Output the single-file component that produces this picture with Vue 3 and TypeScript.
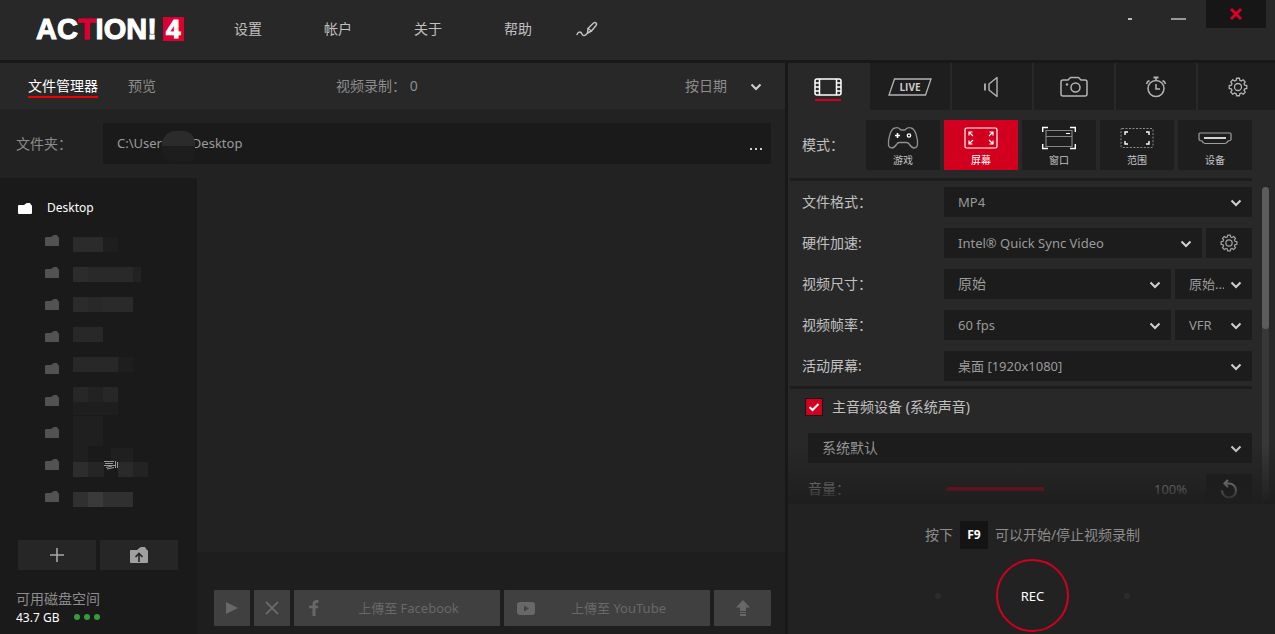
<script setup lang="ts">
import { ref } from 'vue'

interface Block { x: number; y: number; w: number; h: number; c: string }
interface Mode { id: string; label: string }

const menu: string[] = ['设置', '帐户', '关于', '帮助']
const tabs: string[] = ['film', 'live', 'audio', 'camera', 'timer', 'gear']
const tabNames: string[] = ['视频录制', '直播', '音频', '截图', '计时', '设置']
const modes: Mode[] = [
  { id: 'game', label: '游戏' },
  { id: 'screen', label: '屏幕' },
  { id: 'window', label: '窗口' },
  { id: 'area', label: '范围' },
  { id: 'device', label: '设备' },
]
const activeTab = ref('film')
const activeMode = ref('screen')
const path = ref('C:\\Users       Desktop')
const audioOn = ref(true)
const folders = 9

const hidden: Block[] = [
  { x: 0, y: 7, w: 30, h: 15, c: '#2b2b2b' },
  { x: 30, y: 7, w: 15, h: 15, c: '#1e1e1e' },
  { x: 0, y: 37, w: 15, h: 15, c: '#2c2c2c' },
  { x: 15, y: 37, w: 45, h: 15, c: '#292929' },
  { x: 60, y: 37, w: 8, h: 15, c: '#222222' },
  { x: 0, y: 67, w: 15, h: 15, c: '#2b2b2b' },
  { x: 15, y: 67, w: 15, h: 15, c: '#282828' },
  { x: 30, y: 67, w: 30, h: 15, c: '#2a2a2a' },
  { x: 0, y: 97, w: 30, h: 15, c: '#282828' },
  { x: 0, y: 127, w: 45, h: 15, c: '#282828' },
  { x: 45, y: 127, w: 15, h: 15, c: '#1e1e1e' },
  { x: 0, y: 157, w: 45, h: 15, c: '#272727' },
  { x: 15, y: 157, w: 15, h: 15, c: '#222222' },
  { x: 0, y: 172, w: 45, h: 13, c: '#1e1e1e' },
  { x: 0, y: 186, w: 30, h: 30, c: '#1f1f1f' },
  { x: 0, y: 216, w: 15, h: 16, c: '#1f1f1f' },
  { x: 38, y: 218, w: 22, h: 14, c: '#1f1f1f' },
  { x: 0, y: 232, w: 15, h: 15, c: '#2d2d2d' },
  { x: 15, y: 232, w: 16, h: 15, c: '#252525' },
  { x: 45, y: 232, w: 15, h: 15, c: '#2a2a2a' },
  { x: 60, y: 232, w: 15, h: 15, c: '#232323' },
  { x: 0, y: 262, w: 15, h: 15, c: '#303030' },
  { x: 15, y: 262, w: 15, h: 15, c: '#3a3a3a' },
  { x: 30, y: 262, w: 30, h: 15, c: '#303030' },
]

const gearPath = (() => {
  const pts: string[] = []
  const teeth = 8
  for (let i = 0; i < teeth; i++) {
    const a = (i / teeth) * Math.PI * 2 - Math.PI / 2
    const steps: [number, number][] = [[-0.27, 6.9], [-0.17, 8.9], [0.17, 8.9], [0.27, 6.9]]
    for (const [d, r] of steps) {
      pts.push(`${(10 + Math.cos(a + d) * r).toFixed(2)} ${(10 + Math.sin(a + d) * r).toFixed(2)}`)
    }
  }
  return `M${pts.join('L')}Z`
})()
</script>

<template>
  <div class="app">
    <header class="top">
      <div class="logo"><span class="word">AC<em>T</em>ION!</span><span class="four">4</span></div>
      <nav class="menu">
        <a v-for="m in menu" :key="m" href="#">{{ m }}</a>
        <button class="pen" aria-label="绘图">
          <svg width="22" height="16" viewBox="0 0 22 16" fill="none" stroke="#c4c4c4" stroke-width="1.4" stroke-linecap="round" stroke-linejoin="round">
            <path d="M1 13.500C2.500 10 5 10.500 6 13S9 15 11.500 12" />
            <path d="M11.500 12L12 7.500L17.500 2C19.500.500 21.500 2.500 20 4.500L15.500 10Z" />
            <path d="M12 7.500L15.500 10" />
          </svg>
        </button>
      </nav>
      <div class="win">
        <button class="tiny" aria-label="迷你模式"><i></i></button>
        <button class="mini" aria-label="最小化"><i></i></button>
        <button class="close" aria-label="关闭">
          <svg width="12" height="12" viewBox="0 0 12 12" stroke="#e00025" stroke-width="2.800"><path d="M1 1L11 11M11 1L1 11" /></svg>
        </button>
      </div>
    </header>

    <main class="body">
      <section class="left">
        <div class="bar">
          <button class="view on">文件管理器</button>
          <button class="view">预览</button>
          <span class="count">视频录制： 0</span>
          <span class="pick sort">
            <select aria-label="排序"><option>按日期</option></select>
            <svg class="chev" width="12" height="8" viewBox="0 0 12 8"><path d="M1.500 1.500L6 6L10.500 1.500" /></svg>
          </span>
        </div>
        <div class="pathrow">
          <label for="path">文件夹：</label>
          <div class="field">
            <input id="path" v-model="path" type="text" spellcheck="false" />
            <span class="smudge"></span>
            <button aria-label="浏览"><i></i><i></i><i></i></button>
          </div>
        </div>
        <div class="files">
          <aside class="side">
            <button class="root">
              <svg width="14" height="11" viewBox="0 0 14 11" fill="#fff"><path d="M0 3Q0 2 1 2H6L8 .5Q8.500 0 9 0H12L12.800 1.500Q14 2 14 3V10Q14 11 13 11H1Q0 11 0 10Z" /></svg>
              Desktop
            </button>
            <div class="tree">
              <ul>
                <li v-for="n in folders" :key="n">
                  <svg width="14" height="11" viewBox="0 0 14 11" fill="#525252"><path d="M0 3Q0 2 1 2H6L8 .5Q8.500 0 9 0H12L12.800 1.500Q14 2 14 3V10Q14 11 13 11H1Q0 11 0 10Z" /></svg>
                </li>
              </ul>
              <svg class="hidden" width="76" height="288" viewBox="0 0 76 288">
                <rect v-for="(b, i) in hidden" :key="i" :x="b.x" :y="b.y" :width="b.w" :height="b.h" :fill="b.c" />
                <path d="M31 231.500H41M32 233.500H40M31 235.500H42M33 237.500L39 236M34 239L41 237.500M42.500 231V238M44.500 232V238" stroke="#999" stroke-width="1" fill="none" />
              </svg>
            </div>
            <div class="sidebtns">
              <button aria-label="添加"><svg width="14" height="14" viewBox="0 0 14 14" stroke="#a8a8a8" stroke-width="1.600"><path d="M7 0V14M0 7H14" /></svg></button>
              <button aria-label="上级文件夹">
                <svg width="18" height="16" viewBox="0 0 18 16"><path d="M0 4Q0 3 1 3H7L10 .5Q10.500 0 11 0H15L16.500 2.500Q18 3 18 4V15Q18 16 17 16H1Q0 16 0 15Z" fill="#a0a0a0" /><path d="M9 15V6.500M5.500 10L9 6.500L12.500 10" fill="none" stroke="#242424" stroke-width="1.600" /></svg>
              </button>
            </div>
            <p class="disk">可用磁盘空间</p>
            <p class="free">43.7 GB <span><i></i><i></i><i></i></span></p>
          </aside>
          <div class="content">
            <div class="list"></div>
            <div class="actions">
              <button class="sq" disabled aria-label="播放"><svg width="14" height="14" viewBox="0 0 14 14" fill="#686868"><path d="M1 1L13 7L1 13Z" /></svg></button>
              <button class="sq" disabled aria-label="删除"><svg width="14" height="14" viewBox="0 0 14 14" stroke="#686868" stroke-width="1.800"><path d="M1 1L13 13M13 1L1 13" /></svg></button>
              <button class="up" disabled>
                <svg width="18" height="16" viewBox="0 0 18 16" fill="none" stroke="#686868" stroke-width="3"><path d="M11.500 1.500H9.500Q7 1.500 7 4.500V16" /><path d="M2 7H11" stroke-width="2.600" /></svg>
                <span>上傳至 Facebook</span>
              </button>
              <button class="up" disabled>
                <svg width="18" height="13" viewBox="0 0 18 13"><rect width="18" height="13" rx="3" fill="#686868" /><path d="M7 3.500V9.500L12 6.500Z" fill="#444" /></svg>
                <span>上傳至 YouTube</span>
              </button>
              <button class="wide" disabled aria-label="上传"><svg width="14" height="16" viewBox="0 0 14 16" fill="#686868"><path d="M7 0L14 7.500H10V11H4V7.500H0ZM4 12H10V13H4ZM4 14H10V16H4Z" /></svg></button>
            </div>
          </div>
        </div>
      </section>

      <section class="right">
        <div class="tabs">
          <button v-for="(t, i) in tabs" :key="t" :class="{ on: activeTab === t }" :aria-label="tabNames[i]" @click="activeTab = t">
            <svg v-if="t === 'film'" width="28" height="18" viewBox="0 0 28 18" fill="none" stroke="#fff" stroke-width="1.500">
              <rect x="1" y="1" width="26" height="16" rx="2" /><path d="M5.500 1V17M22.500 1V17M1 5H5.500M1 9H5.500M1 13H5.500M22.500 5H27M22.500 9H27M22.500 13H27" />
            </svg>
            <svg v-else-if="t === 'live'" width="44" height="18" viewBox="0 0 44 18" fill="none" stroke="#b4b4b4" stroke-width="1.300">
              <path d="M6.500 1H43L37.500 17H1Z" /><text x="22" y="13" text-anchor="middle" fill="#ccc" stroke="none" class="live">LIVE</text>
            </svg>
            <svg v-else-if="t === 'audio'" width="18" height="22" viewBox="0 0 18 22" fill="none" stroke="#b4b4b4" stroke-width="1.400">
              <path d="M6 8L14 1.500V20.500L6 14Z" stroke-linejoin="round" /><path d="M2 7.500V14.500" stroke-width="1.800" />
            </svg>
            <svg v-else-if="t === 'camera'" width="28" height="22" viewBox="0 0 28 22" fill="none" stroke="#b4b4b4" stroke-width="1.500">
              <path d="M3 4H8L10.500 1.500H18.500L21 4H25Q27 4 27 6V18Q27 20 25 20H3Q1 20 1 18V6Q1 4 3 4Z" stroke-linejoin="round" /><circle cx="15.500" cy="11.500" r="4.500" /><circle cx="7" cy="8.500" r="1.200" fill="#b4b4b4" stroke="none" />
            </svg>
            <svg v-else-if="t === 'timer'" width="22" height="22" viewBox="0 0 22 22" fill="none" stroke="#b4b4b4" stroke-width="1.500">
              <circle cx="11" cy="12.500" r="8" /><path d="M11 8V13H15M11 2V4.500M1.500 8Q2 5.500 4.500 4.500M20.500 8Q20 5.500 17.500 4.500" /><path d="M8.500 1.500H13.500" stroke-width="2" />
            </svg>
            <svg v-else width="20" height="20" viewBox="0 0 20 20" fill="none" stroke="#b4b4b4" stroke-width="1.300" stroke-linejoin="round">
              <path :d="gearPath" /><circle cx="10" cy="10" r="3.500" />
            </svg>
          </button>
        </div>

        <div class="modes">
          <span class="lab">模式：</span>
          <div class="modegrid">
            <button v-for="m in modes" :key="m.id" :class="{ on: activeMode === m.id }" @click="activeMode = m.id">
              <svg v-if="m.id === 'game'" width="34" height="24" viewBox="0 0 34 24" fill="none" stroke="#909090" stroke-width="1.300">
                <path d="M9 2Q12 1 14 3L15 4H19L20 3Q22 1 25 2Q28 2.500 30 8Q32 14 31.500 19Q31 22 28 22Q26 22 23.500 18.500Q22.500 16.500 20.500 16.500H13.500Q11.500 16.500 10.500 18.500Q8 22 6 22Q3 22 2.500 19Q2 14 4 8Q6 2.500 9 2Z" />
                <path d="M11.500 7V12M9 9.500H14" stroke="#fff" stroke-width="1.600" /><circle cx="23" cy="9.500" r="1.700" stroke="#fff" />
              </svg>
              <svg v-else-if="m.id === 'screen'" width="34" height="24" viewBox="0 0 34 24" fill="none" stroke="#fff" stroke-width="1.200">
                <rect x="1" y="2" width="32" height="20" rx="1.500" />
                <path d="M5 9.500V6H8.500M5 6L9 10M29 9.500V6H25.500M29 6L25 10M5 14.500V18H8.500M5 18L9 14M29 14.500V18H25.500M29 18L25 14" />
              </svg>
              <svg v-else-if="m.id === 'window'" width="34" height="24" viewBox="0 0 34 24" fill="none">
                <g stroke="#848484" stroke-width="1.200"><path d="M4 4.500H30V20.500H4ZM4 10.500H30" /></g>
                <path d="M.700 6V1.500H6M28 1.500H33.300V6M.700 18V22.500H6M28 22.500H33.300V18" stroke="#fff" stroke-width="1.400" /><path d="M24 7.500H28" stroke="#fff" />
              </svg>
              <svg v-else-if="m.id === 'area'" width="34" height="24" viewBox="0 0 34 24" fill="none">
                <rect x="1" y="2.500" width="32" height="19" rx="1" stroke="#8a8a8a" stroke-dasharray="2 1.500" />
                <path d="M5 9V6H8M26 6H29V9M5 15V18H8M26 18H29V15" stroke="#fff" stroke-width="1.400" />
              </svg>
              <svg v-else width="34" height="24" viewBox="0 0 34 24" fill="none">
                <path d="M2 7H32Q33 7 33 8V13Q33 14 32 14.500L30 15Q29 17.500 27 17.500H7Q5 17.500 4 15L2 14.500Q1 14 1 13V8Q1 7 2 7Z" stroke="#a0a0a0" stroke-width="1.200" />
                <path d="M6 12H28" stroke="#fff" stroke-width="1.600" />
              </svg>
              <span>{{ m.label }}</span>
            </button>
          </div>
        </div>

        <div class="settings">
          <div class="rows">
            <div class="row first">
              <label for="fmt">文件格式：</label>
              <span class="pick"><select id="fmt"><option>MP4</option></select><svg class="chev" width="12" height="8" viewBox="0 0 12 8"><path d="M1.500 1.500L6 6L10.500 1.500" /></svg></span>
            </div>
            <div class="row">
              <label for="hw">硬件加速:</label>
              <span class="pick"><select id="hw"><option>Intel® Quick Sync Video</option></select><svg class="chev" width="12" height="8" viewBox="0 0 12 8"><path d="M1.500 1.500L6 6L10.500 1.500" /></svg></span>
              <button class="icon" aria-label="加速设置"><svg width="18" height="18" viewBox="0 0 20 20" fill="none" stroke="#a0a0a0" stroke-width="1.400" stroke-linejoin="round"><path :d="gearPath" /><circle cx="10" cy="10" r="3.500" /></svg></button>
            </div>
            <div class="row">
              <label for="size">视频尺寸：</label>
              <span class="pick han"><select id="size"><option>原始</option></select><svg class="chev" width="12" height="8" viewBox="0 0 12 8"><path d="M1.500 1.500L6 6L10.500 1.500" /></svg></span>
              <span class="pick small"><select aria-label="宽高比"><option>原始...</option></select><svg class="chev" width="12" height="8" viewBox="0 0 12 8"><path d="M1.500 1.500L6 6L10.500 1.500" /></svg></span>
            </div>
            <div class="row">
              <label for="fps">视频帧率：</label>
              <span class="pick"><select id="fps"><option>60 fps</option></select><svg class="chev" width="12" height="8" viewBox="0 0 12 8"><path d="M1.500 1.500L6 6L10.500 1.500" /></svg></span>
              <span class="pick small"><select aria-label="帧率模式"><option>VFR</option></select><svg class="chev" width="12" height="8" viewBox="0 0 12 8"><path d="M1.500 1.500L6 6L10.500 1.500" /></svg></span>
            </div>
            <div class="row">
              <label for="scr">活动屏幕:</label>
              <span class="pick"><select id="scr"><option>桌面 [1920x1080]</option></select><svg class="chev" width="12" height="8" viewBox="0 0 12 8"><path d="M1.500 1.500L6 6L10.500 1.500" /></svg></span>
            </div>
            <div class="audio">
              <label class="check">
                <input v-model="audioOn" type="checkbox" />
                <svg v-if="audioOn" class="tick" width="16" height="16" viewBox="0 0 16 16" fill="none" stroke="#fff" stroke-width="2"><path d="M3.500 8L6.500 11L12.500 5" /></svg>
                主音频设备 (系统声音)
              </label>
              <span class="pick han"><select aria-label="主音频设备"><option>系统默认</option></select><svg class="chev" width="12" height="8" viewBox="0 0 12 8"><path d="M1.500 1.500L6 6L10.500 1.500" /></svg></span>
              <div class="volume">
                <label for="vol">音量：</label>
                <input id="vol" type="range" min="0" max="200" value="100" />
                <output for="vol">100%</output>
                <button class="icon" aria-label="重置"><svg width="18" height="20" viewBox="0 0 18 20" fill="none" stroke="#ccc" stroke-width="2.200"><path d="M8 1L4.500 4.500L8 8M4.500 4.500H9A7 7 0 1 1 2 11.500" /></svg></button>
              </div>
            </div>
          </div>
          <div class="scroll"><i></i></div>
          <div class="fade"></div>
        </div>

        <footer class="foot">
          <p>按下 <kbd>F9</kbd> 可以开始/停止视频录制</p>
          <div class="recrow"><i></i><button class="rec">REC</button><i></i></div>
        </footer>
      </section>
    </main>
  </div>
</template>

<style>
body { background: #222; }
</style>

<style scoped>
* { box-sizing: border-box; }
.app { display: flex; flex-direction: column; min-height: 100vh; background: #282828; color: #bcbcbc; font-family: "Noto Sans", "Noto Sans CJK SC", sans-serif; font-size: 13px; line-height: 20px; overflow: hidden; }
button, select, input { font: inherit; color: inherit; background: none; border: 0; margin: 0; padding: 0; border-radius: 0; outline: none; }
button { display: flex; align-items: center; justify-content: center; cursor: pointer; }
svg { display: block; flex: none; }
p, ul { margin: 0; padding: 0; list-style: none; }

.top { display: flex; height: 63px; border-bottom: 3px solid #181818; padding-left: 36px; }
.logo { display: flex; align-items: center; gap: 6px; width: 198px; height: 58px; color: #fff; font-family: "Liberation Sans", sans-serif; font-weight: 700; }
.word { font-size: 29px; line-height: 24px; -webkit-text-stroke: 1px currentColor; }
.word em { font-style: normal; color: #dc0032; }
.four { width: 21px; background: #dc0032; font-size: 26px; line-height: 24px; text-align: center; -webkit-text-stroke: 1px currentColor; }
.menu { display: flex; align-items: center; gap: 62px; height: 58px; font-size: 14px; }
.menu a { color: #c0c0c0; text-decoration: none; }
.pen { margin-left: -18px; }
.win { display: flex; align-items: flex-start; margin-left: auto; padding-right: 9px; }
.tiny, .mini { height: 38px; }
.tiny { width: 24px; margin-right: 12px; }
.mini { width: 48px; margin-right: 4px; }
.tiny i { width: 4px; height: 2px; background: #bbb; }
.mini i { width: 15px; height: 2px; background: #999; }
.close { width: 60px; height: 28px; background: #161616; }

.body { flex: 1; display: flex; }
.left { flex: 1; display: flex; flex-direction: column; min-width: 0; border-right: 3px solid #181818; background: #222; }
.bar { display: flex; align-items: center; height: 46px; padding: 0 20px 0 28px; background: #282828; color: #8c8c8c; font-size: 14px; }
.view { margin-right: 30px; height: 24px; padding-top: 2px; border-bottom: 2px solid transparent; }
.view.on { color: #fff; border-color: #f00000; }
.count { margin-left: 150px; }
.sort { margin-left: auto; width: 80px; }
.pathrow { display: flex; align-items: center; height: 69px; padding: 0 14px 0 16px; color: #8c8c8c; font-size: 14px; }
.pathrow label { width: 87px; }
.field { position: relative; flex: 1; display: flex; height: 41px; background: #1a1a1a; font-size: 13px; color: #9a9a9a; }
.field input { flex: 1; padding-left: 14px; padding-bottom: 2px; }
.smudge { position: absolute; left: 59px; top: 8px; width: 33px; height: 30px; border-radius: 14px 12px 4px 12px; background: linear-gradient(#2b2b2b 50%, #1d1d1d 50%); }
.field button { width: 30px; gap: 3px; padding-top: 10px; }
.field button i { width: 2px; height: 2px; background: #ccc; }

.files { flex: 1; display: flex; }
.side { width: 197px; padding-top: 18px; background: #1a1a1a; }
.root { height: 24px; margin-left: 18px; gap: 15px; color: #fff; font-size: 12px; }
.tree { display: flex; gap: 14px; height: 320px; padding: 10px 0 0 45px; }
.tree li { display: flex; height: 32px; padding-top: 5px; }
.sidebtns { display: flex; gap: 4px; padding: 0 19px 0 18px; }
.sidebtns button { flex: 1; height: 30px; background: #262626; }
.disk { margin: 19px 0 0 16px; color: #8c8c8c; font-size: 14px; }
.free { display: flex; align-items: center; gap: 15px; height: 18px; margin-left: 16px; color: #fff; font-size: 12px; }
.free span { display: flex; gap: 4px; margin-top: -3px; }
.free i { width: 6px; height: 6px; border-radius: 3px; background: #349c3a; }

.content { flex: 1; display: flex; flex-direction: column; }
.list { flex: 1; }
.actions { display: flex; gap: 4px; padding: 38px 14px 8px 17px; background: #1e1e1e; }
.actions button { height: 36px; background: #404040; border-radius: 1px; color: #686868; font-size: 13px; cursor: default; }
.sq { width: 36px; }
.actions .up { flex: 1; padding: 0 8px 0 13px; }
.actions .up span { flex: 1; text-align: center; }
.wide { width: 57px; }

.right { width: 487px; display: flex; flex-direction: column; background: #282828; }
.tabs { display: grid; grid-template-columns: repeat(6, 80px); gap: 2px; height: 47px; overflow: hidden; }
.tabs button { background: #1e1e1e; }
.tabs button.on { background: none; flex-direction: column; gap: 3px; padding-top: 6px; }
.tabs button.on::after { content: ""; width: 26px; height: 2px; background: #d2001e; }
.live { font: 700 10px "Open Sans", sans-serif; }
.modes { display: flex; align-items: center; padding: 10px 23px 8px 14px; }
.lab { width: 64px; color: #c0c0c0; font-size: 14px; }
.modegrid { flex: 1; display: grid; grid-template-columns: repeat(5, 1fr); gap: 4px; }
.modegrid button { flex-direction: column; height: 50px; padding-top: 4px; background: #1e1e1e; color: #c4c4c4; font-size: 10px; line-height: 16px; gap: 2px; }
.modegrid button.on { background: #d2001e; color: #fff; }

.settings { position: relative; flex: 1; display: flex; padding-right: 6px; }
.rows { flex: 1; padding-left: 2px; }
.row { display: flex; gap: 4px; padding-left: 12px; margin-bottom: 11px; }
.row.first { padding-top: 6px; }
.rows::before { content: ""; display: block; height: 3px; background: #1c1c1c; }
.row label { width: 138px; color: #c0c0c0; font-size: 14px; line-height: 30px; }
.pick { position: relative; flex: 1; display: flex; height: 30px; background: #1c1c1c; color: #9a9a9a; }
.pick.han { font-size: 14px; }
.pick select { flex: 1; width: 100%; appearance: none; padding: 0 28px 0 14px; }
.pick.small { flex: none; width: 77px; }
.chev { position: absolute; right: 10px; top: 12px; pointer-events: none; fill: none; stroke: #d0d0d0; stroke-width: 2; }
.bar .sort { flex: none; background: none; color: #8c8c8c; }
.bar .sort select { padding: 0; }
.bar .sort .chev { right: 3px; }
.icon { width: 46px; height: 30px; background: #1c1c1c; }
.audio { margin-top: -6px; padding-left: 18px; border-top: 3px solid #1c1c1c; }
.check { position: relative; display: flex; align-items: center; gap: 10px; height: 36px; margin: 0 0 8px -2px; color: #c0c0c0; font-size: 14px; }
.check input { appearance: none; width: 16px; height: 16px; background: #1c1c1c; outline: 1px solid #161616; }
.check input:checked { background: #d2001e; }
.tick { position: absolute; left: 0; top: 10px; }
.volume { display: flex; align-items: center; margin-top: 11px; height: 30px; color: #ccc; }
.volume label { width: 138px; font-size: 14px; }
.volume input { appearance: none; width: 196px; height: 4px; background: linear-gradient(90deg, #e8001e 50%, transparent 50%); border-radius: 2px; }
.volume input::-webkit-slider-thumb { appearance: none; width: 1px; height: 1px; }
.volume output { width: 64px; padding-left: 12px; }
.volume .icon { margin-left: auto; }
.scroll { width: 7px; margin: 9px 0 0 10px; background: #383838; border-radius: 4px; }
.scroll i { display: block; height: 142px; background: #5c5c5c; border-radius: 4px; }
.fade { position: absolute; left: 0; right: 0; bottom: 0; height: 60px; background: linear-gradient(rgba(30, 30, 30, 0), rgba(30, 30, 30, .7) 75%, #1e1e1e); pointer-events: none; }

.foot { display: flex; flex-direction: column; align-items: center; height: 130px; padding: 17px 0 0 2px; background: #222; color: #8c8c8c; font-size: 14px; }
.foot p { display: flex; align-items: center; gap: 7px; height: 28px; }
kbd { width: 28px; height: 28px; background: #141414; color: #fff; font: 700 12px/28px "Noto Sans", sans-serif; text-align: center; }
.recrow { display: flex; align-items: center; gap: 55px; margin-top: 10px; }
.recrow i { width: 6px; height: 6px; border-radius: 3px; background: #2c2c2c; }
.rec { width: 73px; height: 73px; border: 2px solid #d2001e; border-radius: 50%; color: #fff; font-size: 13px; }
</style>
